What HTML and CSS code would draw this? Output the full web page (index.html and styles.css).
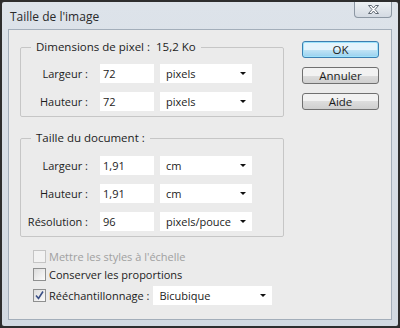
FILE: index.html
```html
<!DOCTYPE html>
<html lang="fr">
<head>
    <meta charset="UTF-8">
    <title>Taille de l'image</title>
    <link rel="stylesheet" href="styles.css">
</head>
<body>
<div class="window">
    <div class="titlebar">
        <span class="title">Taille de l'image</span>
        <div class="close">
            <svg width="13" height="11" viewBox="0 0 13 11">
                <path d="M1.5 1.5h3l2 2.5 2-2.5h3l-3.5 4 3.5 4h-3l-2-2.5-2 2.5h-3l3.5-4z" fill="#fff" stroke="#5f6873" stroke-width="1" stroke-linejoin="round"/>
            </svg>
        </div>
    </div>
    <div class="client">
        <div class="main">
            <fieldset class="group">
                <legend>Dimensions de pixel :&nbsp; 15,2 Ko</legend>
                <div class="row">
                    <label>Largeur :</label>
                    <div class="field">72</div>
                    <div class="select">pixels<span class="arrow"></span></div>
                </div>
                <div class="row">
                    <label>Hauteur :</label>
                    <div class="field">72</div>
                    <div class="select">pixels<span class="arrow"></span></div>
                </div>
            </fieldset>
            <fieldset class="group second">
                <legend>Taille du document :</legend>
                <div class="row">
                    <label>Largeur :</label>
                    <div class="field">1,91</div>
                    <div class="select">cm<span class="arrow"></span></div>
                </div>
                <div class="row">
                    <label>Hauteur :</label>
                    <div class="field">1,91</div>
                    <div class="select">cm<span class="arrow"></span></div>
                </div>
                <div class="row">
                    <label>Résolution :</label>
                    <div class="field">96</div>
                    <div class="select">pixels/pouce<span class="arrow"></span></div>
                </div>
            </fieldset>
            <div class="checks">
                <div class="check disabled"><span class="box"></span>Mettre les styles à l'échelle</div>
                <div class="check"><span class="box"></span>Conserver les proportions</div>
                <div class="check resample">
                    <span class="box">
                        <svg width="11" height="11" viewBox="0 0 11 11"><path d="M2 5.5l2.5 3 4.5-7" fill="none" stroke="#3a4f86" stroke-width="1.6"/></svg>
                    </span>Rééchantillonnage :
                    <div class="select wide">Bicubique<span class="arrow"></span></div>
                </div>
            </div>
        </div>
        <div class="buttons">
            <div class="btn default">OK</div>
            <div class="btn">Annuler</div>
            <div class="btn help">Aide</div>
        </div>
    </div>
</div>
</body>
</html>
```

FILE: styles.css
```css
/*PAGE*/
body{
    margin: 0;
    background-color: #2b2b2b;
    font-family: "Open Sans", "Noto Sans", sans-serif;
    font-size: 11px;
    color: #1c1c1c;
}
/*WINDOW FRAME*/
.window{
    width: 400px;
    height: 328px;
    box-sizing: border-box;
    border: 2px solid #2e2e2e;
    border-radius: 4px;
    background: linear-gradient(#dde3ea, #d2d9e1);
    display: flex;
    flex-direction: column;
}
.titlebar{
    height: 27px;
    display: flex;
    justify-content: space-between;
    align-items: flex-start;
}
.title{
    margin: 6px 0 0 8px;
    font-size: 12px;
    color: #2a2a2a;
}
.close{
    width: 36px;
    height: 15px;
    margin-right: 6px;
    border: 1px solid #8c97a3;
    border-top: none;
    border-radius: 0 0 4px 4px;
    background: linear-gradient(#eef1f4, #d3dae2);
    display: flex;
    justify-content: center;
    align-items: center;
}
/*CLIENT AREA*/
.client{
    flex: 1;
    margin: 0 6px 6px 6px;
    border: 1px solid #a3aeba;
    background-color: #ebebeb;
    display: flex;
    padding: 9px 11px 0 11px;
}
.main{
    width: 264px;
}
.group{
    margin: 0;
    padding: 9px 0 5px 0;
    border: 1px solid #c6c6c6;
    border-radius: 2px;
}
.group.second{
    margin-top: 13px;
    padding-top: 10px;
}
legend{
    margin-left: 10px;
    padding: 0 5px;
    line-height: 16px;
    font-size: 11.5px;
}
.row{
    display: flex;
    height: 19px;
    align-items: center;
}
.row + .row{margin-top: 9px;}
label{
    width: 67px;
    text-align: right;
    margin-right: 12px;
}
.field{
    width: 54px;
    height: 19px;
    line-height: 19px;
    background: #fff;
    padding-left: 3px;
    box-sizing: border-box;
    margin-right: 6px;
}
.select{
    width: 92px;
    height: 19px;
    line-height: 19px;
    background: #fff;
    padding-left: 6px;
    box-sizing: border-box;
    position: relative;
}
.select.wide{
    width: 119px;
    margin-left: 4px;
}
.arrow{
    position: absolute;
    right: 6px;
    top: 8px;
    border-left: 3px solid transparent;
    border-right: 3px solid transparent;
    border-top: 3px solid #111;
}
/*CHECKBOXES*/
.checks{
    margin-top: 10px;
    padding-left: 13px;
}
.check{
    display: flex;
    align-items: center;
    height: 18px;
}
.check.resample{
    height: 19px;
    margin-top: 3px;
}
.box{
    width: 11px;
    height: 11px;
    border: 1px solid #8e8f8f;
    background: linear-gradient(135deg, #dcdcdc, #fbfbfb);
    margin-right: 3px;
    display: flex;
    align-items: center;
    justify-content: center;
}
.disabled{color: #a0a0a0;}
.disabled .box{border-color: #c4c4c4; background: #f2f2f2;}
/*BUTTONS*/
.buttons{
    margin-left: 18px;
    padding-top: 2px;
}
.btn{
    width: 77px;
    height: 17px;
    box-sizing: border-box;
    border: 1px solid #707070;
    border-radius: 3px;
    background: linear-gradient(#f2f2f2 50%, #dddddd 50%, #cfcfcf);
    text-align: center;
    line-height: 15px;
    font-size: 11.5px;
    margin-bottom: 9px;
}
.btn.default{
    border-color: #3c7fb1;
    background: linear-gradient(#e5f4fc 50%, #c4e5f6 50%, #98d1ef);
    box-shadow: inset 0 0 0 1px #9ee3fb;
}
.btn.help{margin-top: 6px;}
```
